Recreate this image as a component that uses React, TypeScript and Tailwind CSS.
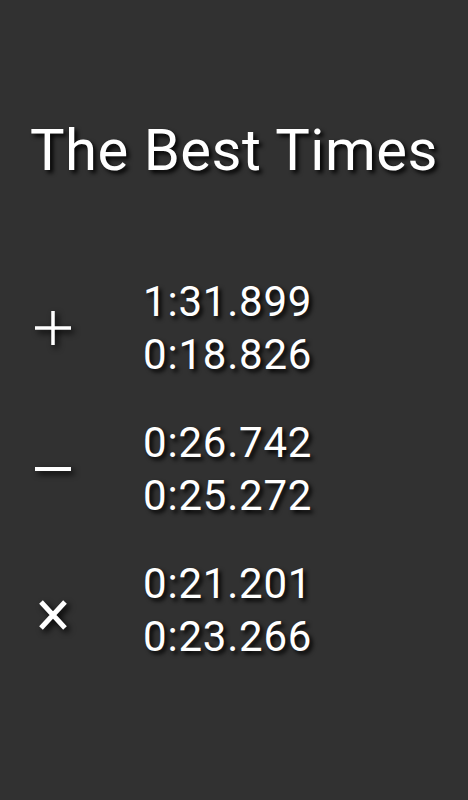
const rows = [
  { sign: "plus", times: ["1:31.899", "0:18.826"] },
  { sign: "minus", times: ["0:26.742", "0:25.272"] },
  { sign: "times", times: ["0:21.201", "0:23.266"] },
];

const shadow = "[text-shadow:3px_3px_4px_rgba(0,0,0,0.95)]";
const iconShadow = "drop-shadow-[3px_3px_3px_rgba(0,0,0,0.95)]";

const SignIcon = ({ sign }: { sign: string }) => {
  if (sign === "plus") {
    return (
      <svg width="36" height="36" viewBox="0 0 36 36" className={iconShadow}>
        <path d="M18 1v34M0 18h36" stroke="white" strokeWidth="3.5" />
      </svg>
    );
  }
  if (sign === "minus") {
    return (
      <svg width="36" height="36" viewBox="0 0 36 36" className={iconShadow}>
        <path d="M0 18h36" stroke="white" strokeWidth="4" />
      </svg>
    );
  }
  return (
    <svg width="36" height="36" viewBox="0 0 36 36" className={`mt-[9px] ${iconShadow}`}>
      <path d="M6 5l24 26M30 5L6 31" stroke="white" strokeWidth="5" />
    </svg>
  );
};

export default function App() {
  return (
    <div className="w-[468px] h-[800px] bg-[#313131] text-white font-['Roboto',sans-serif] flex flex-col">
      <h1 className={`mt-[121px] text-center text-[58px] leading-[58px] tracking-[0.5px] font-normal ${shadow}`}>
        The Best Times
      </h1>

      <div className="mt-[96px] flex flex-col gap-[35px]">
        {rows.map((row) => (
          <div key={row.sign} className="flex items-center">
            <div className="w-[143px] pl-[35px]">
              <SignIcon sign={row.sign} />
            </div>
            <div className={`text-[42px] leading-[53px] tracking-[0.8px] ${shadow}`}>
              {row.times.map((t) => (
                <div key={t}>{t}</div>
              ))}
            </div>
          </div>
        ))}
      </div>
    </div>
  );
}
